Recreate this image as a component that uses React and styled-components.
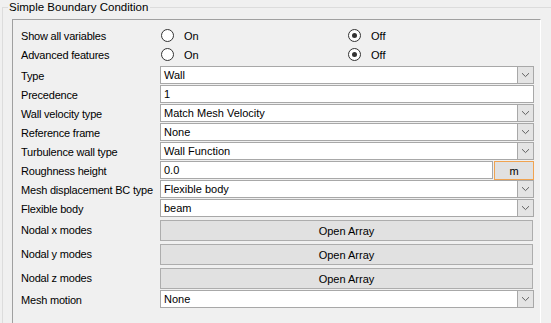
import React from "react";
import styled, { createGlobalStyle } from "styled-components";

const GlobalStyle = createGlobalStyle`
  html, body {
    margin: 0;
    padding: 0;
    background: #f0f0f0;
    overflow: hidden;
  }
  body {
    font-family: "Liberation Sans", Arial, sans-serif;
    font-size: 11px;
    color: #000;
  }
`;

const Group = styled.fieldset`
  margin: 0 0 0 2px;
  width: 580px;
  height: 360px;
  border: 1px solid #dcdcdc;
  padding: 5px 0 0 0;
  box-sizing: border-box;
`;

const Legend = styled.legend`
  margin-left: 5px;
  padding: 0 2px 0 1px;
  font-size: 11.5px;
  line-height: 14px;
`;

const Panel = styled.div`
  width: 529px;
  height: 330px;
  margin-left: 9px;
  box-sizing: border-box;
  border-top: 1px solid #a0a0a0;
  border-left: 1px solid #a0a0a0;
  border-right: 1px solid #ffffff;
  border-bottom: 1px solid #ffffff;
  padding: 6px 6px 0 7px;
  display: grid;
  grid-template-columns: 140px 374px;
  grid-auto-rows: min-content;
  align-content: start;
  align-items: center;
`;

const Label = styled.div`
  height: ${(p) => p.h || 19}px;
  display: flex;
  align-items: center;
  white-space: nowrap;
  padding-left: 1px;
  letter-spacing: -0.2px;
  font-size: 11px;
`;

const Cell = styled.div`
  height: ${(p) => p.h || 19}px;
  display: flex;
  align-items: ${(p) => (p.top ? "flex-start" : "center")};
  padding-top: ${(p) => p.pt || 0}px;
  box-sizing: border-box;
`;

const RadioGroup = styled.div`
  display: flex;
  width: 100%;
`;

const Option = styled.div`
  width: 187px;
  display: flex;
  align-items: center;
  padding-left: 1px;
`;

const Circle = styled.span`
  width: 11px;
  height: 11px;
  border: 1px solid #333;
  border-radius: 50%;
  background: #fff;
  display: flex;
  align-items: center;
  justify-content: center;
  margin-right: 10px;
  &::after {
    content: "";
    width: 5px;
    height: 5px;
    border-radius: 50%;
    background: ${(p) => (p.checked ? "#333" : "transparent")};
  }
`;

const Field = styled.div`
  flex: 1;
  height: 18px;
  box-sizing: border-box;
  border: 1px solid #a8a8a8;
  background: #fff;
  display: flex;
  align-items: center;
  padding-left: 3px;
`;

const Value = styled.span`
  flex: 1;
  white-space: nowrap;
`;

const Arrow = styled.span`
  width: 16px;
  height: 16px;
  box-sizing: border-box;
  border-left: 1px solid #a8a8a8;
  background: #e4e4e4;
  display: flex;
  align-items: center;
  justify-content: center;
`;

const UnitButton = styled.div`
  width: 40px;
  height: 19px;
  margin-left: 1px;
  box-sizing: border-box;
  border: 1px solid #f0a350;
  background: #e1e1e1;
  display: flex;
  align-items: center;
  justify-content: center;
`;

const ArrayButton = styled.div`
  width: 373px;
  height: 21px;
  box-sizing: border-box;
  border: 1px solid #adadad;
  background: #e1e1e1;
  display: flex;
  align-items: center;
  justify-content: center;
`;

const Chevron = () => (
  <svg width="9" height="6" viewBox="0 0 9 6">
    <path d="M1 1.2 L4.5 4.6 L8 1.2" fill="none" stroke="#606060" strokeWidth="1" />
  </svg>
);

const Radios = ({ on }) => (
  <RadioGroup>
    <Option>
      <Circle checked={on} />
      On
    </Option>
    <Option>
      <Circle checked={!on} />
      Off
    </Option>
  </RadioGroup>
);

const Select = ({ value }) => (
  <Field>
    <Value>{value}</Value>
    <Arrow>
      <Chevron />
    </Arrow>
  </Field>
);

const rows = [
  { label: "Type", select: "Wall" },
  { label: "Precedence", text: "1" },
  { label: "Wall velocity type", select: "Match Mesh Velocity" },
  { label: "Reference frame", select: "None" },
  { label: "Turbulence wall type", select: "Wall Function" },
  { label: "Roughness height", text: "0.0", unit: "m" },
  { label: "Mesh displacement BC type", select: "Flexible body" },
  { label: "Flexible body", select: "beam" },
];

export default function App() {
  return (
    <>
      <GlobalStyle />
      <Group>
        <Legend>Simple Boundary Condition</Legend>
        <Panel>
          <Label>Show all variables</Label>
          <Cell>
            <Radios on={false} />
          </Cell>
          <Label>Advanced features</Label>
          <Cell>
            <Radios on={false} />
          </Cell>
          <Label h={2} />
          <Cell h={2} />
          {rows.map((r) => (
            <React.Fragment key={r.label}>
              <Label>{r.label}</Label>
              <Cell top>
                {r.select ? (
                  <Select value={r.select} />
                ) : (
                  <>
                    <Field>
                      <Value>{r.text}</Value>
                    </Field>
                    {r.unit && <UnitButton>{r.unit}</UnitButton>}
                  </>
                )}
              </Cell>
            </React.Fragment>
          ))}
          {["Nodal x modes", "Nodal y modes", "Nodal z modes"].map((l) => (
            <React.Fragment key={l}>
              <Label h={24}>{l}</Label>
              <Cell h={24} top pt={2}>
                <ArrayButton>Open Array</ArrayButton>
              </Cell>
            </React.Fragment>
          ))}
          <Label>Mesh motion</Label>
          <Cell top>
            <Select value="None" />
          </Cell>
        </Panel>
      </Group>
    </>
  );
}
